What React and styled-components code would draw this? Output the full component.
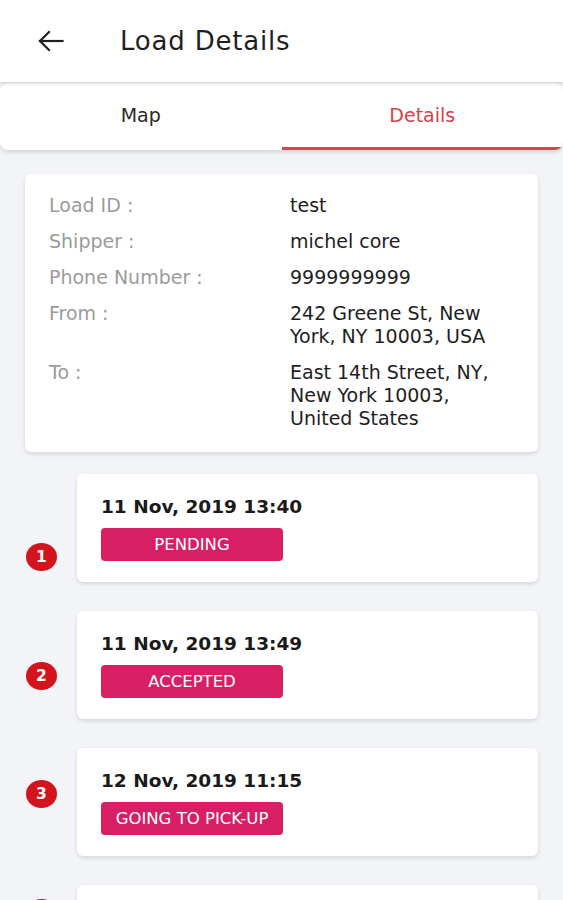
import React from "react";
import styled, { createGlobalStyle } from "styled-components";

const GlobalStyle = createGlobalStyle`
  body {
    margin: 0;
    background: #f3f4f8;
    font-family: "DejaVu Sans", Roboto, "Liberation Sans", sans-serif;
    color: #212121;
  }
`;

const Header = styled.header`
  height: 82px;
  background: #fff;
  display: flex;
  align-items: center;
  padding-left: 37px;
  gap: 56px;
  box-shadow: 0 2px 3px rgba(0, 0, 0, 0.12);
  position: relative;
  z-index: 2;
`;

const Title = styled.h1`
  margin: 0;
  font-size: 26px;
  font-weight: 400;
  letter-spacing: 0.8px;
  color: #1f1f1f;
`;

const TabBar = styled.nav`
  margin-top: 1px;
  height: 67px;
  background: #fff;
  display: grid;
  grid-template-columns: 1fr 1fr;
  border-radius: 8px;
  box-shadow: 0 2px 4px rgba(0, 0, 0, 0.14);
  overflow: hidden;
  position: relative;
  z-index: 1;
`;

const Tab = styled.div`
  display: flex;
  align-items: center;
  justify-content: center;
  font-size: 19px;
  color: ${(p) => (p.$active ? "#d6424a" : "#2a2a2a")};
  border-bottom: 3px solid ${(p) => (p.$active ? "#d9444c" : "transparent")};
`;

const Content = styled.main`
  padding: 24px 25px 0 25px;
`;

const Card = styled.div`
  background: #fff;
  border-radius: 6px;
  box-shadow: 0 2px 4px rgba(0, 0, 0, 0.13);
`;

const InfoCard = styled(Card)`
  padding: 20px 24px 22px 24px;
  display: grid;
  grid-template-columns: 241px 1fr;
  row-gap: 13px;
  font-size: 19px;
  line-height: 23px;
`;

const Label = styled.div`
  color: #9b9b9b;
`;

const Value = styled.div`
  color: #1e1e1e;
`;

const Timeline = styled.section`
  margin-top: 22px;
  display: grid;
  grid-template-columns: 52px 1fr;
`;

const Steps = styled.div`
  display: flex;
  flex-direction: column;
  gap: 90.5px;
  padding-top: 69px;
  padding-left: 1px;
`;

const StepDot = styled.div`
  width: 31px;
  height: 28px;
  border-radius: 50%;
  background: #d3141d;
  color: #fff;
  font-size: 15.5px;
  font-weight: 700;
  display: flex;
  align-items: center;
  justify-content: center;
`;

const Events = styled.div`
  display: flex;
  flex-direction: column;
  gap: 29px;
`;

const EventCard = styled(Card)`
  height: 108px;
  box-sizing: border-box;
  padding: 21px 24px 0 24px;
`;

const EventDate = styled.div`
  font-size: 18.5px;
  font-weight: 700;
  line-height: 24px;
  color: #1a1a1a;
`;

const Badge = styled.div`
  margin-top: 9px;
  width: 182px;
  height: 33px;
  border-radius: 4px;
  background: #d81f66;
  color: #fff;
  font-size: 16.5px;
  display: flex;
  align-items: center;
  justify-content: center;
  text-transform: uppercase;
`;

const BackIcon = () => (
  <svg width="27" height="24" viewBox="0 0 27 24" fill="none" stroke="#1f1f1f" strokeWidth="2.2" strokeLinecap="square">
    <path d="M3 12H25.5" />
    <path d="M12 3L3 12L12 21" />
  </svg>
);

const info = [
  ["Load ID :", "test"],
  ["Shipper :", "michel core"],
  ["Phone Number :", "9999999999"],
  ["From :", ["242 Greene St, New", "York, NY 10003, USA"]],
  ["To :", ["East 14th Street, NY,", "New York 10003,", "United States"]],
];

const events = [
  { date: "11 Nov, 2019 13:40", status: "Pending" },
  { date: "11 Nov, 2019 13:49", status: "Accepted" },
  { date: "12 Nov, 2019 11:15", status: "Going to pick-up" },
  { date: "12 Nov, 2019 11:42", status: "Picked-up" },
];

export default function App() {
  return (
    <>
      <GlobalStyle />
      <Header>
        <BackIcon />
        <Title>Load Details</Title>
      </Header>
      <TabBar>
        <Tab>Map</Tab>
        <Tab $active>Details</Tab>
      </TabBar>
      <Content>
        <InfoCard>
          {info.map(([label, value]) => (
            <React.Fragment key={label}>
              <Label>{label}</Label>
              <Value>
                {Array.isArray(value)
                  ? value.map((line) => <div key={line}>{line}</div>)
                  : value}
              </Value>
            </React.Fragment>
          ))}
        </InfoCard>
        <Timeline>
          <Steps>
            {events.map((e, i) => (
              <StepDot key={i}>{i + 1}</StepDot>
            ))}
          </Steps>
          <Events>
            {events.map((e) => (
              <EventCard key={e.date}>
                <EventDate>{e.date}</EventDate>
                <Badge>{e.status}</Badge>
              </EventCard>
            ))}
          </Events>
        </Timeline>
      </Content>
    </>
  );
}
